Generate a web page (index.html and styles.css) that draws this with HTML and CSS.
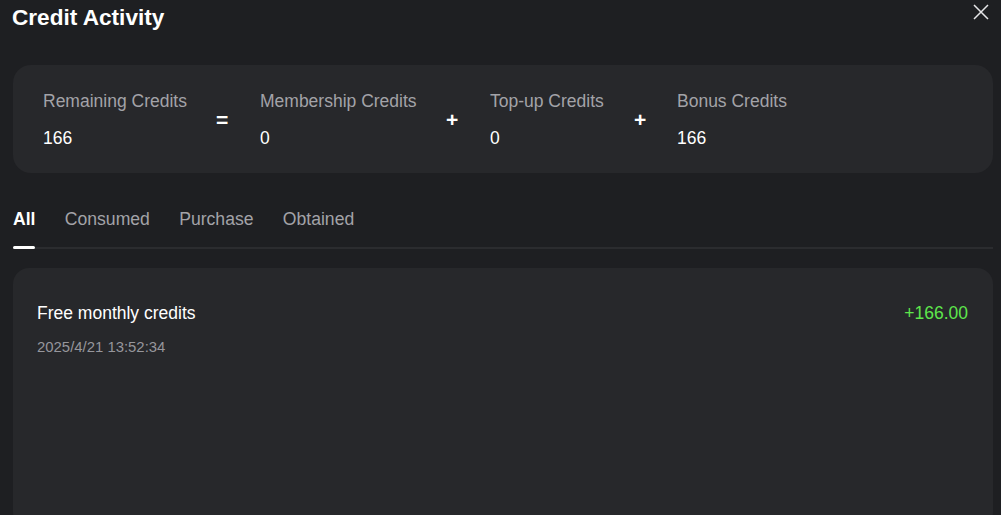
FILE: index.html
```html
<!DOCTYPE html>
<html lang="en">
<head>
<meta charset="utf-8">
<title>Credit Activity</title>
<link rel="stylesheet" href="styles.css">
</head>
<body>
<div class="modal">
  <header class="head">
    <h1 class="title">Credit Activity</h1>
    <button class="close" aria-label="Close">
      <svg width="16" height="16" viewBox="0 0 16 16"><path d="M1 1L15 15M15 1L1 15" stroke="#e6e6e8" stroke-width="1.5" fill="none"/></svg>
    </button>
  </header>
  <section class="summary">
    <div class="stat s1"><div class="label">Remaining Credits</div><div class="value">166</div></div>
    <div class="op o1">=</div>
    <div class="stat s2"><div class="label">Membership Credits</div><div class="value">0</div></div>
    <div class="op o2">+</div>
    <div class="stat s3"><div class="label">Top-up Credits</div><div class="value">0</div></div>
    <div class="op o3">+</div>
    <div class="stat s4"><div class="label">Bonus Credits</div><div class="value">166</div></div>
  </section>
  <nav class="tabs">
    <div class="tab active">All</div>
    <div class="tab">Consumed</div>
    <div class="tab">Purchase</div>
    <div class="tab">Obtained</div>
  </nav>
  <section class="list">
    <div class="item">
      <div class="item-main">
        <div class="item-title">Free monthly credits</div>
        <div class="item-date">2025/4/21 13:52:34</div>
      </div>
      <div class="amount">+166.00</div>
    </div>
  </section>
</div>
</body>
</html>
```
FILE: styles.css
```css
* { box-sizing: border-box; }
html, body { margin: 0; padding: 0; }
body {
  background: #1e1f22;
  font-family: "Liberation Sans", Arial, sans-serif;
  color: #fff;
  width: 1001px;
  height: 515px;
  overflow: hidden;
}
.modal { padding: 0 8px 0 13px; }
.head {
  display: flex;
  justify-content: space-between;
  align-items: flex-start;
  height: 65px;
}
.title {
  margin: 5px 0 0 -1px;
  font-size: 22.6px;
  font-weight: bold;
  line-height: 26px;
  color: #fff;
}
.close {
  background: none;
  border: 0;
  padding: 0;
  margin: 4px 4px 0 0;
  width: 16px;
  height: 16px;
  cursor: pointer;
}
.close svg { display: block; }
.summary {
  display: flex;
  align-items: center;
  background: #27282b;
  border-radius: 18px;
  height: 108px;
  padding: 2px 30px 0;
}
.stat { display: flex; flex-direction: column; }
.label { font-size: 17.5px; line-height: 21px; color: #a3a3a8; }
.value { font-size: 17.5px; line-height: 21px; color: #fff; margin-top: 16px; }
.op { font-size: 21px; color: #fff; font-weight: bold; }
.s1 { width: 173px; }
.o1 { width: 44px; }
.s2 { width: 186px; }
.o2 { width: 44px; }
.s3 { width: 144px; }
.o3 { width: 43px; }
.tabs {
  display: flex;
  gap: 29.3px;
  margin-top: 35px;
  border-bottom: 2px solid #2b2c2f;
  height: 41px;
}
.tab {
  font-size: 17.6px;
  line-height: 21px;
  color: #a3a3a8;
  position: relative;
  height: 39px;
  padding-top: 1px;
}
.tab.active {
  color: #fff;
  font-weight: bold;
}
.tab.active::after {
  content: "";
  position: absolute;
  left: 0;
  right: 0;
  bottom: -2px;
  height: 3px;
  border-radius: 2px;
  background: #fff;
}
.list {
  margin-top: 19px;
  background: #27282b;
  border-radius: 16px;
  height: 260px;
  padding: 35px 25px 0 24px;
}
.item { display: flex; justify-content: space-between; align-items: flex-start; }
.item-title { font-size: 17.5px; line-height: 21px; color: #fff; }
.item-date { font-size: 14.9px; line-height: 18px; color: #96969c; margin-top: 14px; }
.amount { font-size: 17.5px; line-height: 21px; color: #5ee64b; }
```
